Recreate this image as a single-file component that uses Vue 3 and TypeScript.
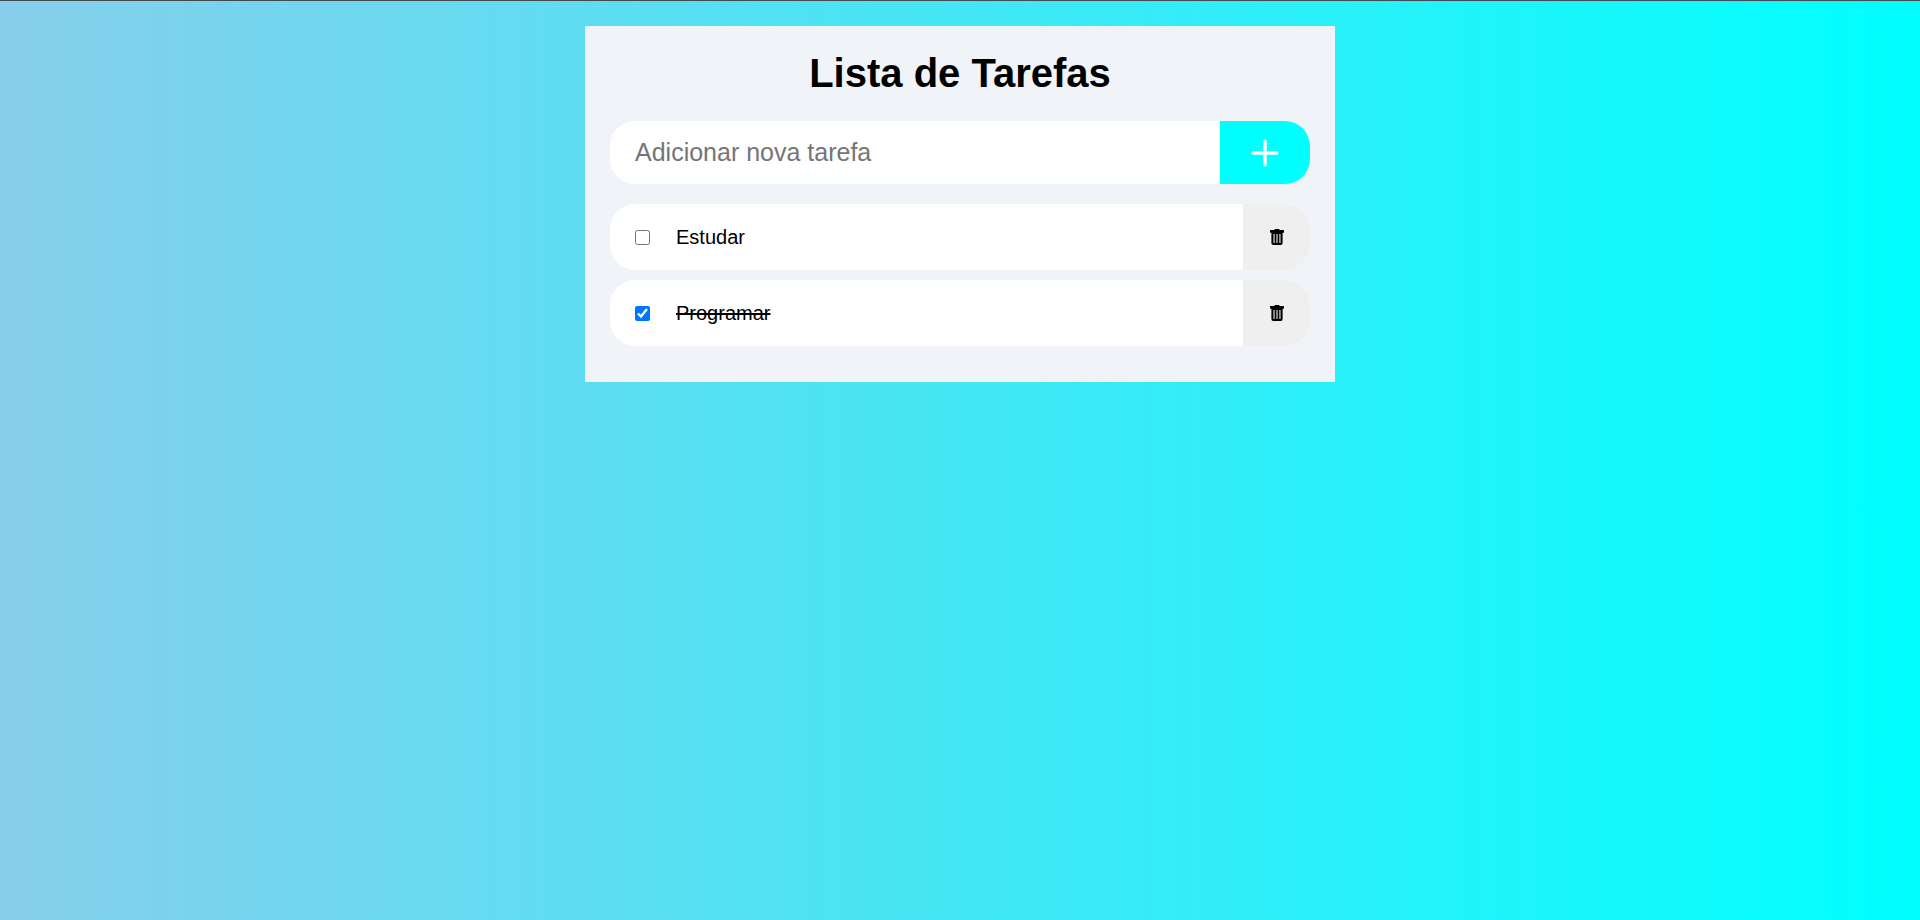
<script setup lang="ts">
import { ref } from 'vue'

interface Task {
  id: number
  name: string
  done: boolean
}

const tasks = ref<Task[]>([
  { id: 1, name: 'Estudar', done: false },
  { id: 2, name: 'Programar', done: true },
])
const draft = ref('')

function addTask(): void {
  const name = draft.value.trim()
  if (!name) return
  tasks.value.push({ id: Date.now(), name, done: false })
  draft.value = ''
}

function removeTask(id: number): void {
  tasks.value = tasks.value.filter((task) => task.id !== id)
}
</script>

<template>
  <main class="page">
    <section class="card">
      <h1 class="title">Lista de Tarefas</h1>
      <form class="new-task" @submit.prevent="addTask">
        <input
          v-model="draft"
          class="new-task-input"
          type="text"
          placeholder="Adicionar nova tarefa"
          aria-label="Adicionar nova tarefa"
        />
        <button class="add" type="submit" aria-label="Adicionar">
          <svg class="plus" viewBox="0 0 28 28" aria-hidden="true">
            <path d="M14 2.300v23.400M2.300 14h23.400" />
          </svg>
        </button>
      </form>
      <ul class="tasks">
        <li v-for="task in tasks" :key="task.id" class="task">
          <input :id="`task-${task.id}`" v-model="task.done" class="check" type="checkbox" />
          <label :for="`task-${task.id}`" class="name" :class="{ done: task.done }">{{ task.name }}</label>
          <button class="remove" type="button" :aria-label="`Remover ${task.name}`" @click="removeTask(task.id)">
            <svg class="trash" viewBox="0 0 14 16" aria-hidden="true">
              <path
                fill-rule="evenodd"
                d="M5.200 0h3.600q.6 0 .8 1H13.300q.7 0 .7.700v1.500q0 .6-.6.600H12.600V14q0 2-1.800 2H3.200q-1.800 0-1.800-2V3.800H.6Q0 3.800 0 3.200V1.700Q0 1 .7 1H4.400Q4.600 0 5.200 0zM3.500 5v9h1.100V5zM6.450 5v9h1.100V5zM9.400 5v9h1.100V5z"
              />
            </svg>
          </button>
        </li>
      </ul>
    </section>
  </main>
</template>

<style>
body {
  margin: 0;
}
</style>

<style scoped>
.page {
  box-sizing: border-box;
  min-height: 100vh;
  padding: 25px;
  border-top: 1px solid #444b50;
  background: linear-gradient(to right, skyblue, aqua);
  font-family: Arial, 'Liberation Sans', sans-serif;
  color: #000;
}

.card {
  box-sizing: border-box;
  max-width: 750px;
  margin: 0 auto;
  padding: 25px 25px 36px;
  background: #f0f4f9;
}

.title {
  margin: 0 0 25px;
  font-size: 40px;
  line-height: 45px;
  font-weight: 700;
  text-align: center;
}

.new-task {
  display: flex;
  height: 63px;
  margin-bottom: 20px;
}

.new-task-input {
  flex: 1;
  min-width: 0;
  padding: 0 25px;
  border: 0;
  border-radius: 25px 0 0 25px;
  background: #fff;
  font: inherit;
  font-size: 25px;
}

.new-task-input::placeholder {
  color: #757575;
}

.add,
.remove {
  display: flex;
  align-items: center;
  justify-content: center;
  padding: 0;
  border: 0;
  border-radius: 0 25px 25px 0;
  cursor: pointer;
}

.add {
  width: 90px;
  background: aqua;
}

.plus {
  width: 28px;
  height: 28px;
  fill: none;
  stroke: #fff;
  stroke-width: 3.5;
  stroke-linecap: round;
}

.tasks {
  display: flex;
  flex-direction: column;
  gap: 10px;
  margin: 0;
  padding: 0;
  list-style: none;
}

.task {
  display: flex;
  align-items: center;
  height: 66px;
  padding-left: 25px;
  border-radius: 25px;
  background: #fff;
}

.check {
  width: 15px;
  height: 15px;
  margin: 0 26px 0 0;
}

.name {
  flex: 1;
  font-size: 20px;
  line-height: 24px;
}

.done {
  text-decoration: line-through;
}

.remove {
  align-self: stretch;
  width: 67px;
  background: #efefef;
}

.trash {
  width: 14px;
  height: 16px;
}
</style>
